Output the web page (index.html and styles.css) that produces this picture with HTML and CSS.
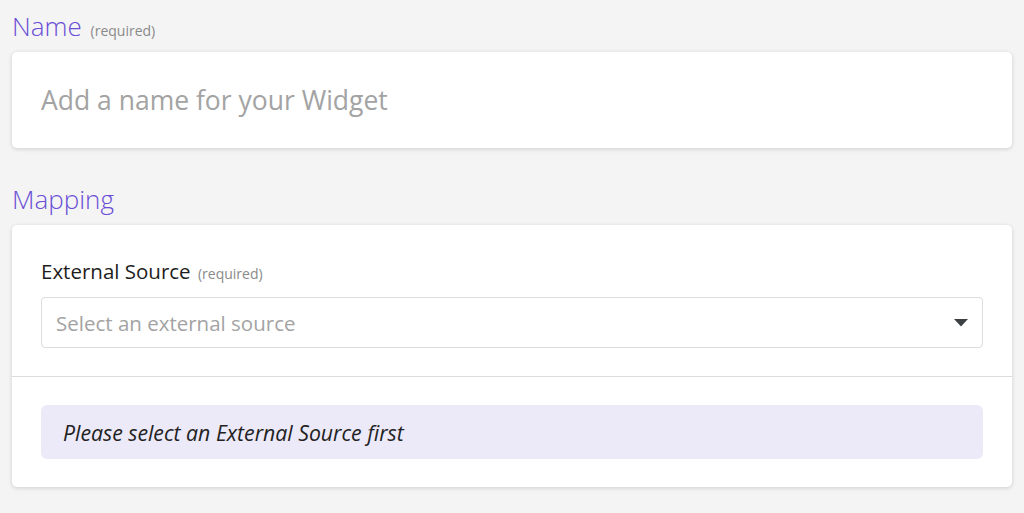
FILE: index.html
```html
<!DOCTYPE html>
<html lang="en">
<head>
    <meta charset="UTF-8">
    <meta name="viewport" content="width=device-width, initial-scale=1.0">
    <title>New Widget</title>
    <link rel="stylesheet" href="styles.css">
</head>
<body>
    <main class="widget-form">
        <section class="form-group">
            <h2 class="group-title">Name <span class="required">(required)</span></h2>
            <div class="card">
                <input class="name-input" type="text" placeholder="Add a name for your Widget">
            </div>
        </section>

        <section class="form-group">
            <h2 class="group-title">Mapping</h2>
            <div class="card">
                <div class="card-section">
                    <label class="field-label">External Source <span class="required">(required)</span></label>
                    <div class="select-box">
                        <span class="select-placeholder">Select an external source</span>
                        <svg class="caret" viewBox="0 0 14 8" width="14" height="8"><path d="M0 0h14L7 7.5z" fill="#3c4043"/></svg>
                    </div>
                </div>
                <div class="card-section">
                    <div class="notice">Please select an External Source first</div>
                </div>
            </div>
        </section>
    </main>
</body>
</html>
```

FILE: styles.css
```css
body { margin: 0; background-color: #f4f4f4; color: #222; font-family: 'Open Sans', 'Noto Sans', sans-serif; }
.widget-form { padding: 9px 12px 26px; display: flex; flex-direction: column; gap: 34px; }
.form-group { display: flex; flex-direction: column; gap: 9px; }
.group-title { margin: 0; font-size: 26px; font-weight: 300; line-height: 34px; color: #6a4fd6; }
.required { font-size: 14px; font-weight: 400; line-height: 1; color: #8a8a8a; margin-left: 2px; }
.card { background: #fff; border-radius: 5px; box-shadow: 0 1px 4px rgba(0, 0, 0, 0.16); }
.name-input { display: block; width: 100%; box-sizing: border-box; height: 96px; border: none; outline: none; background: transparent; padding: 0 29px; font-family: inherit; font-size: 26.5px; color: #222; }
.name-input::placeholder { color: #a3a3a3; }
.card-section { padding: 28px 29px; display: flex; flex-direction: column; gap: 13px; }
.card-section:first-child { padding-top: 33px; }
.card-section + .card-section { border-top: 1px solid #dcdcdc; }
.field-label { font-size: 20.5px; line-height: 26px; color: #1e1e1e; }
.select-box { box-sizing: border-box; height: 51px; border: 1px solid #dcdcdc; border-radius: 4px; display: flex; align-items: center; justify-content: space-between; padding: 0 14px; }
.select-placeholder { font-size: 20.5px; color: #a3a3a3; }
.notice { background: #ece9f8; border-radius: 6px; padding: 0 22px; height: 54px; display: flex; align-items: center; font-size: 21.25px; font-style: italic; color: #222; }
```
